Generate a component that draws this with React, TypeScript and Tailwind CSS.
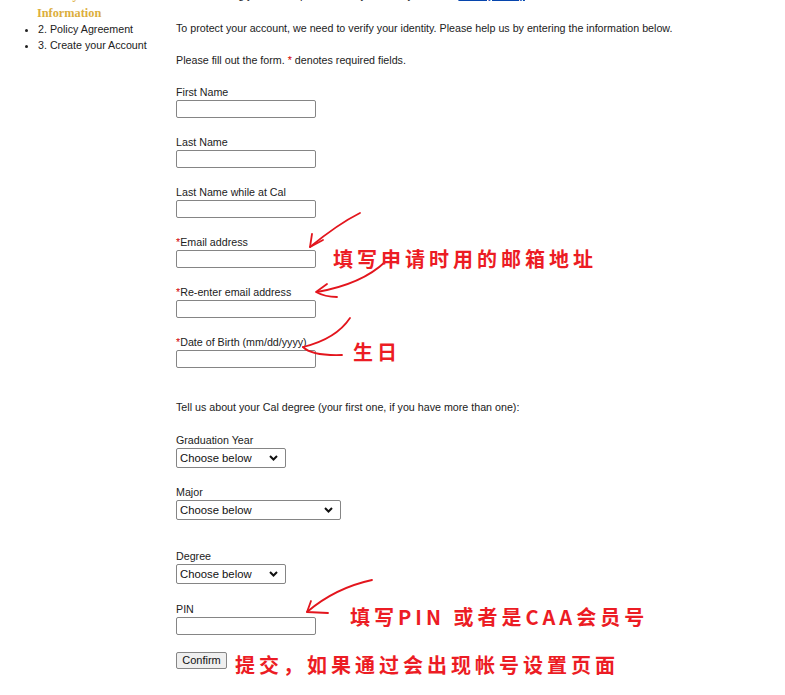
import { ReactNode } from 'react';

function Field({ label, required, className }: { label: string; required?: boolean; className?: string }) {
  return (
    <div className={className}>
      <div>
        {required && <span className="text-[#d40000]">*</span>}
        {label}
      </div>
      <input
        type="text"
        className="mt-[1px] block h-[18px] w-[140px] rounded-[2px] border border-[#858585] bg-white px-1"
      />
    </div>
  );
}

function Select({ label, width, className }: { label: string; width: string; className?: string }) {
  return (
    <div className={className}>
      <div>{label}</div>
      <div className={`mt-[1px] flex h-[20px] ${width} items-center justify-between rounded-[2px] border border-[#858585] bg-white pl-[3px] pr-[7px]`}>
        <span className="text-[11.3px] text-[#111]">Choose below</span>
        <svg width="9" height="6" viewBox="0 0 9 6">
          <path d="M1 1 L4.5 4.5 L8 1" fill="none" stroke="#111" strokeWidth="2" />
        </svg>
      </div>
    </div>
  );
}

function Note({ children, className }: { children: ReactNode; className: string }) {
  return (
    <div
      className={`absolute whitespace-nowrap text-[20px] leading-none font-semibold tracking-[4px] text-[#ec1c24] font-['Noto_Sans_CJK_SC','Noto_Sans',sans-serif] ${className}`}
    >
      {children}
    </div>
  );
}

export default function App() {
  return (
    <div className="relative h-[695px] w-[785px] overflow-hidden bg-white font-['Liberation_Sans',Arial,sans-serif] text-[10.7px] leading-[13px] text-[#222]">
      <div className="flex">
        <aside className="-mt-[13px] w-[176px] shrink-0 pl-[37px]">
          <div className="font-['Liberation_Serif',serif] text-[12.3px] font-bold leading-[16px] text-[#dcae3c]">
            <div>Identity</div>
            <div className="mt-[2px]">Information</div>
          </div>
          <ul className="ml-[1px] list-disc leading-[16px] text-[#222]">
            <li>2. Policy Agreement</li>
            <li>3. Create your Account</li>
          </ul>
        </aside>

        <main className="-mt-[11px] flex-1">
          <p>
            We are asking you these questions for your safety. See our{' '}
            <a className="text-[#0645ad] underline">Privacy Policy</a>
          </p>
          <p className="mt-[20px]">
            To protect your account, we need to verify your identity. Please help us by entering the information below.
          </p>
          <p className="mt-[19px]">
            Please fill out the form. <span className="text-[#d40000]">*</span> denotes required fields.
          </p>

          <Field className="mt-[19px]" label="First Name" />
          <Field className="mt-[18px]" label="Last Name" />
          <Field className="mt-[18px]" label="Last Name while at Cal" />
          <Field className="mt-[18px]" label="Email address" required />
          <Field className="mt-[18px]" label="Re-enter email address" required />
          <Field className="mt-[18px]" label="Date of Birth (mm/dd/yyyy)" required />

          <p className="mt-[33px]">Tell us about your Cal degree (your first one, if you have more than one):</p>

          <Select className="mt-[20px]" label="Graduation Year" width="w-[110px]" />
          <Select className="mt-[18px]" label="Major" width="w-[165px]" />
          <Select className="mt-[30px]" label="Degree" width="w-[110px]" />
          <Field className="mt-[19px]" label="PIN" />

          <button
            type="button"
            className="mt-[17px] block h-[17px] w-[51px] rounded-[2px] border border-[#858585] bg-[#efefef] text-[11px] leading-[15px] text-[#111]"
          >
            Confirm
          </button>
        </main>
      </div>

      <svg className="pointer-events-none absolute inset-0" width="785" height="695" viewBox="0 0 785 695">
        <g fill="none" stroke="#e3151d" strokeWidth="1.8" strokeLinecap="round" strokeLinejoin="round">
          <path d="M360 213 Q338 224 310 247" />
          <path d="M312 234 L310 247 L323 240" />
          <path d="M385 262 Q362 284 317 292" />
          <path d="M327 284 L316 292 Q325 297 337 297" />
          <path d="M350 318 Q336 339 303 347" />
          <path d="M303 347 Q312 356 342 355" />
          <path d="M372 580 Q335 588 307 612" />
          <path d="M311 601 L307 612 L328 613" />
        </g>
      </svg>

      <Note className="left-[333px] top-[249px]">填写申请时用的邮箱地址</Note>
      <Note className="left-[353px] top-[342px]">生日</Note>
      <Note className="left-[350px] top-[607px]">填写PIN 或者是CAA会员号</Note>
      <Note className="left-[235px] top-[655px]">提交，如果通过会出现帐号设置页面</Note>
    </div>
  );
}
